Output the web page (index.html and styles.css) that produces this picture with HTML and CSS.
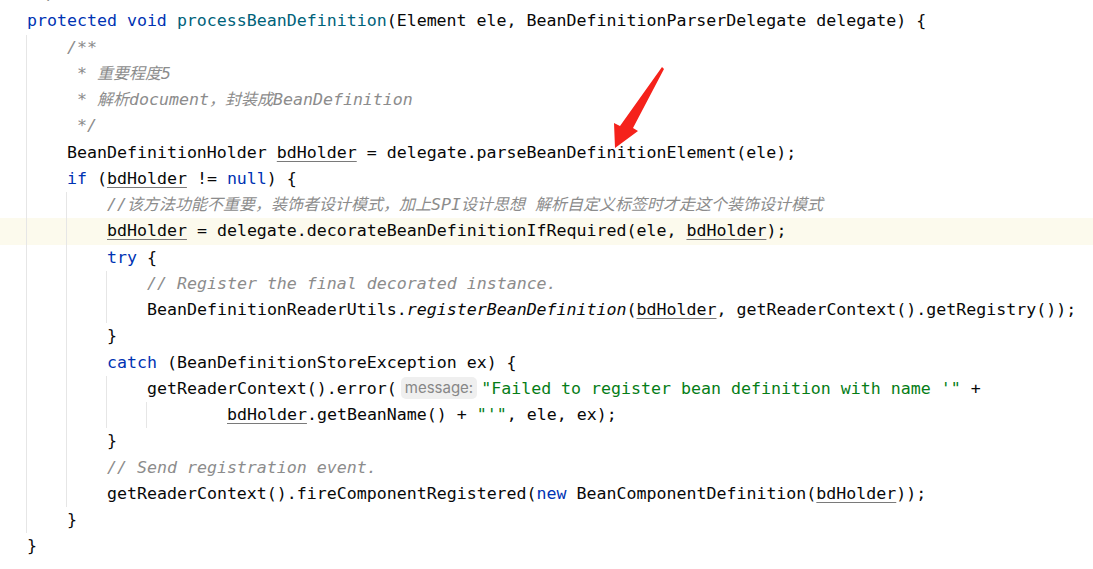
FILE: index.html
```html
<!DOCTYPE html>
<html lang="en">
<head>
  <meta charset="UTF-8">
  <meta name="viewport" content="width=device-width, initial-scale=1.0">
  <title>processBeanDefinition</title>
  <link rel="stylesheet" href="styles.css">
</head>
<body>

  <div class="editor">
    <div class="line"><span class="cm"> */</span></div>
    <div class="line"><span class="kw">protected void</span> <span class="fn">processBeanDefinition</span>(Element ele, BeanDefinitionParserDelegate delegate) {</div>

    <div class="block">
      <div class="line"><span class="cm">/**</span></div>
      <div class="line"><span class="cm"> * <span class="cn">重要程度</span>5</span></div>
      <div class="line"><span class="cm"> * <span class="cn">解析</span>document<span class="cn">，封装成</span>BeanDefinition</span></div>
      <div class="line"><span class="cm"> */</span></div>
      <div class="line">BeanDefinitionHolder <span class="var">bdHolder</span> = delegate.parseBeanDefinitionElement(ele);</div>
      <div class="line"><span class="kw">if</span> (<span class="var">bdHolder</span> != <span class="kw">null</span>) {</div>

      <div class="block">
        <div class="line"><span class="cm">//<span class="cn">该方法功能不重要，装饰者设计模式，加上</span>SPI<span class="cn">设计思想</span> <span class="cn">解析自定义标签时才走这个装饰设计模式</span></span></div>
        <div class="line current"><span class="var">bdHolder</span> = delegate.decorateBeanDefinitionIfRequired(ele, <span class="var">bdHolder</span>);</div>
        <div class="line"><span class="kw">try</span> {</div>
        <div class="block">
          <div class="line"><span class="cm">// Register the final decorated instance.</span></div>
          <div class="line">BeanDefinitionReaderUtils.<span class="static">registerBeanDefinition</span>(<span class="var">bdHolder</span>, getReaderContext().getRegistry());</div>
        </div>
        <div class="line">}</div>
        <div class="line"><span class="kw">catch</span> (BeanDefinitionStoreException ex) {</div>
        <div class="block">
          <div class="line">getReaderContext().error(<span class="hint">message:</span><span class="str">"Failed to register bean definition with name '"</span> +</div>
          <div class="block wrap">
            <div class="line"><span class="var">bdHolder</span>.getBeanName() + <span class="str">"'"</span>, ele, ex);</div>
          </div>
        </div>
        <div class="line">}</div>
        <div class="line"><span class="cm">// Send registration event.</span></div>
        <div class="line">getReaderContext().fireComponentRegistered(<span class="kw">new</span> BeanComponentDefinition(<span class="var">bdHolder</span>));</div>
      </div>

      <div class="line">}</div>
    </div>

    <div class="line">}</div>
  </div>

  <svg class="arrow" width="70" height="90" viewBox="0 0 70 90">
    <polygon points="56,3 58,5 27,64 32,67 9,84 8,59 14,62" fill="#f5221b"/>
  </svg>

</body>
</html>
```

FILE: styles.css
```css
body {
  margin: 0;
  background-color: #fff;
  color: #080808;
  overflow: hidden;
}

.editor {
  position: relative;
  margin-top: -18px;
  padding-left: 27px;
  font-family: "DejaVu Sans Mono", "Noto Sans CJK SC", monospace;
  font-size: 16.6px;
}

.line {
  height: 26.25px;
  line-height: 26.25px;
  white-space: pre;
}

/* indent guides */
.block {
  margin-left: -1px;
  padding-left: 40px;
  border-left: 1px solid #e6e6e6;
}

.block.wrap {
  padding-left: 80px;
}

/* caret row */
.current::before {
  content: "";
  position: absolute;
  left: 0;
  right: 0;
  height: 26.25px;
  background-color: #fcfaed;
  z-index: -1;
}

.kw {
  color: #0033b3;
}

.fn {
  color: #00627a;
}

.cm {
  color: #8c8c8c;
  font-style: italic;
}

.cn {
  font-size: 16px;
}

.str {
  color: #067d17;
}

.static {
  font-style: italic;
}

.var {
  text-decoration: underline;
  text-decoration-color: #7a7a7a;
  text-underline-offset: 3px;
}

.hint {
  display: inline-block;
  margin: 0 4px 0 4px;
  padding: 0 4px;
  line-height: 22px;
  border-radius: 5px;
  background-color: #efefef;
  color: #878787;
  font-family: Inter, "Noto Sans", sans-serif;
  font-size: 15px;
  vertical-align: 1px;
}

.arrow {
  position: absolute;
  left: 606px;
  top: 64px;
}
```
